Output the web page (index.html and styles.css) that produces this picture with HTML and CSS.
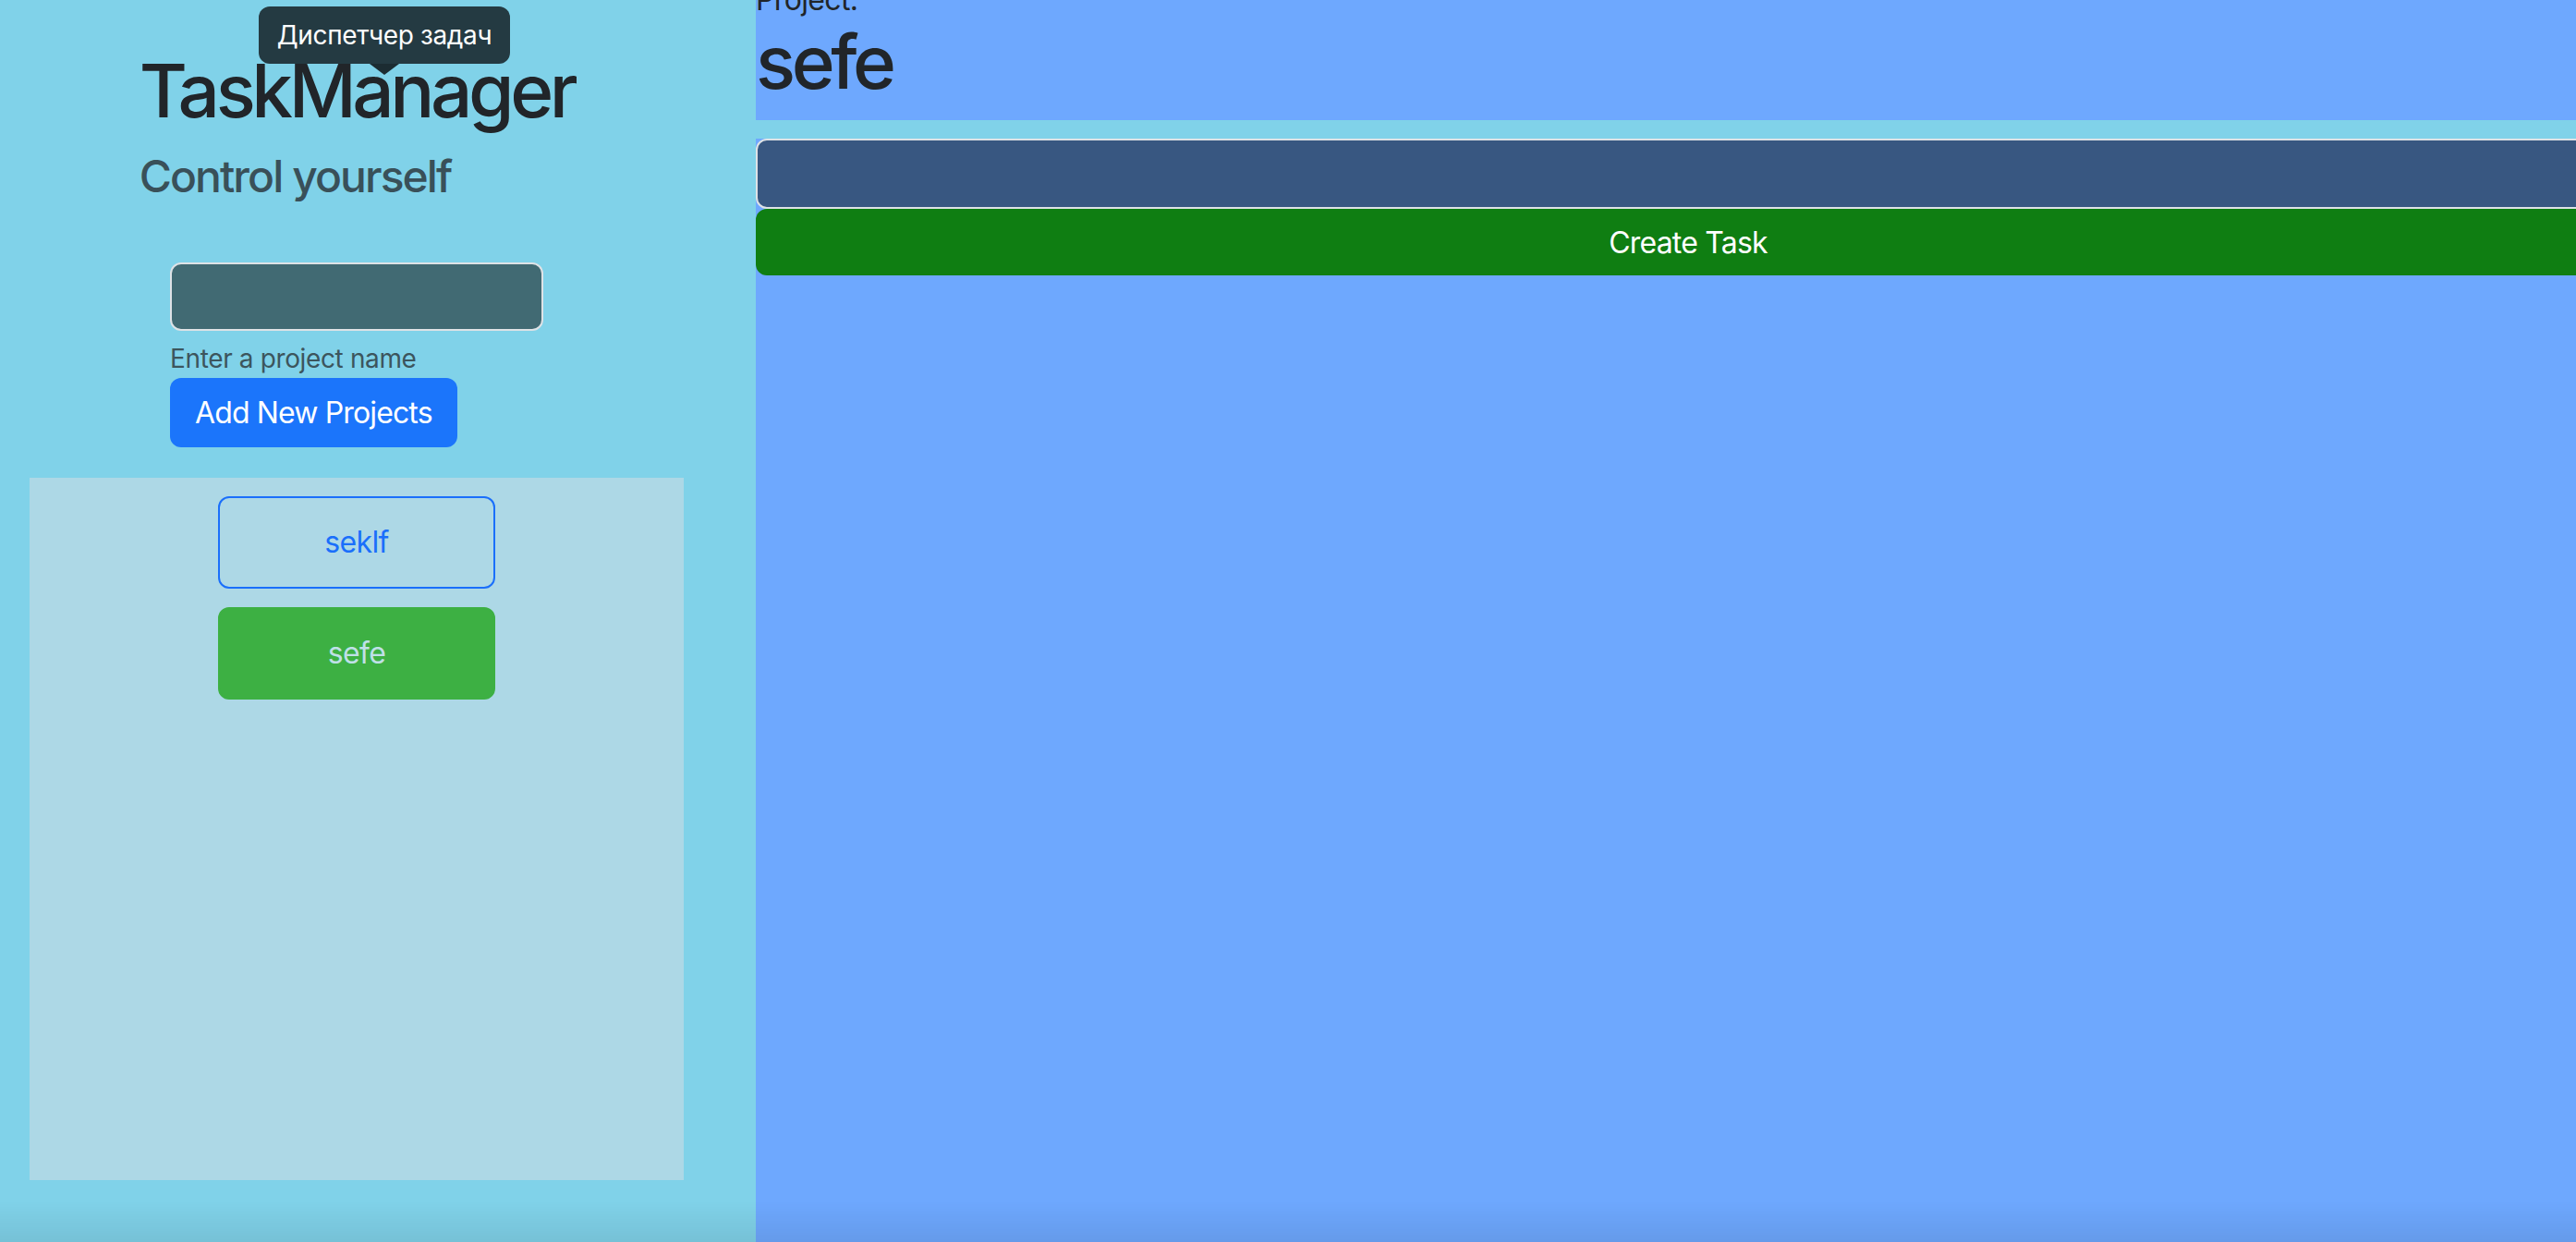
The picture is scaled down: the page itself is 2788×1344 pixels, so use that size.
FILE: index.html
```html
<!DOCTYPE html>
<html lang="ru">
<head>
<meta charset="utf-8">
<title>TaskManager</title>
<link rel="stylesheet" href="styles.css">
</head>
<body>
<div class="app">
  <aside class="sidebar">
    <div class="brand">
      <h1 class="brand-title">TaskManager</h1>
      <h4 class="brand-sub">Control yourself</h4>
    </div>
    <form class="new-project">
      <input class="project-input" type="text" aria-label="Project name">
      <div class="form-text">Enter a project name</div>
      <button class="btn-add" type="button">Add New Projects</button>
    </form>
    <div class="project-list">
      <button class="project project-outline" type="button">seklf</button>
      <button class="project project-active" type="button">sefe</button>
    </div>
    <div class="tooltip">Диспетчер задач</div>
  </aside>
  <main class="content">
    <header class="project-header">
      <p class="project-label">Project:</p>
      <h1 class="project-title">sefe</h1>
    </header>
    <section class="task-form">
      <input class="task-input" type="text" aria-label="Task name">
      <button class="btn-create" type="button">Create Task</button>
    </section>
  </main>
</div>
<div class="window-shade"></div>
</body>
</html>
```

FILE: styles.css
```css
html, body {
  margin: 0;
  height: 100%;
  overflow: hidden;
}

body {
  background: #80d2e9;
  font-family: Inter, "Liberation Sans", sans-serif;
  color: #212529;
}

.app {
  display: flex;
  height: 1344px;
}

.sidebar {
  flex: none;
  width: 818px;
  box-sizing: border-box;
  padding: 50px 78px 0 32px;
  position: relative;
}

.brand {
  width: fit-content;
  margin: 0 auto;
}

.brand-title {
  margin: 0 0 16px;
  font-size: 80px;
  line-height: 1.2;
  font-weight: 500;
  letter-spacing: -0.055em;
  color: #212529;
}

.brand-sub {
  margin: 0;
  font-size: 48px;
  line-height: 1.2;
  font-weight: 500;
  letter-spacing: -0.04em;
  color: #395059;
}

.new-project {
  width: 404px;
  margin: 64px auto 0;
}

.project-input {
  display: block;
  width: 100%;
  height: 74px;
  box-sizing: border-box;
  border: 2px solid #dee2e6;
  border-radius: 12px;
  background: #416a73;
  margin: 0;
}

.form-text {
  margin-top: 9px;
  font-size: 28px;
  line-height: 1.5;
  letter-spacing: -0.013em;
  color: #3c555d;
}

.btn-add {
  display: inline-block;
  height: 75px;
  padding: 0 27px;
  border: none;
  border-radius: 12px;
  background: #1b75fb;
  color: #fff;
  font-family: inherit;
  font-size: 32px;
  font-weight: 400;
  letter-spacing: -0.027em;
}

.project-list {
  margin-top: 33px;
  height: 760px;
  box-sizing: border-box;
  padding-top: 20px;
  background: #add8e6;
  display: flex;
  flex-direction: column;
  align-items: center;
  gap: 20px;
}

.project {
  width: 300px;
  height: 100px;
  box-sizing: border-box;
  border-radius: 12px;
  font-family: inherit;
  font-size: 32px;
  font-weight: 400;
  letter-spacing: -0.02em;
}

.project-outline {
  background: transparent;
  border: 2px solid #1a6ffb;
  color: #1a6ffb;
}

.project-active {
  background: #3db043;
  border: 2px solid #3db043;
  color: #bfe0e7;
}

.tooltip {
  position: absolute;
  left: 280px;
  top: 7px;
  width: 272px;
  height: 62px;
  line-height: 62px;
  text-align: center;
  font-size: 28px;
  letter-spacing: -0.013em;
  color: #fff;
  background: #243a42;
  border-radius: 12px;
}

.tooltip::after {
  content: "";
  position: absolute;
  left: 50%;
  top: 100%;
  transform: translateX(-50%);
  border-left: 16px solid transparent;
  border-right: 16px solid transparent;
  border-top: 12px solid #1c2c32;
}

.content {
  flex: none;
  width: 2018px;
  display: flex;
  flex-direction: column;
}

.project-header {
  background: #6ea8fe;
  padding-bottom: 15px;
}

.project-label {
  margin: -19px 0 0;
  font-size: 32px;
  line-height: 1.2;
  letter-spacing: -0.02em;
}

.project-title {
  margin: 0;
  font-size: 80px;
  line-height: 1.2;
  font-weight: 500;
  letter-spacing: -0.055em;
}

.task-form {
  flex: 1;
  margin-top: 20px;
  background: #6ea8fe;
}

.task-input {
  display: block;
  width: 100%;
  height: 76px;
  box-sizing: border-box;
  margin: 0;
  border: 2px solid #dee2e6;
  border-radius: 12px;
  background: #385781;
}

.btn-create {
  display: block;
  width: 100%;
  height: 72px;
  border: none;
  border-radius: 12px;
  background: #0f7e12;
  color: #fff;
  font-family: inherit;
  font-size: 32px;
  letter-spacing: -0.025em;
}

.window-shade {
  position: fixed;
  left: 0;
  right: 0;
  bottom: 0;
  height: 44px;
  pointer-events: none;
  background: linear-gradient(to bottom, rgba(0, 0, 0, 0), rgba(0, 0, 0, 0.08));
}
```
